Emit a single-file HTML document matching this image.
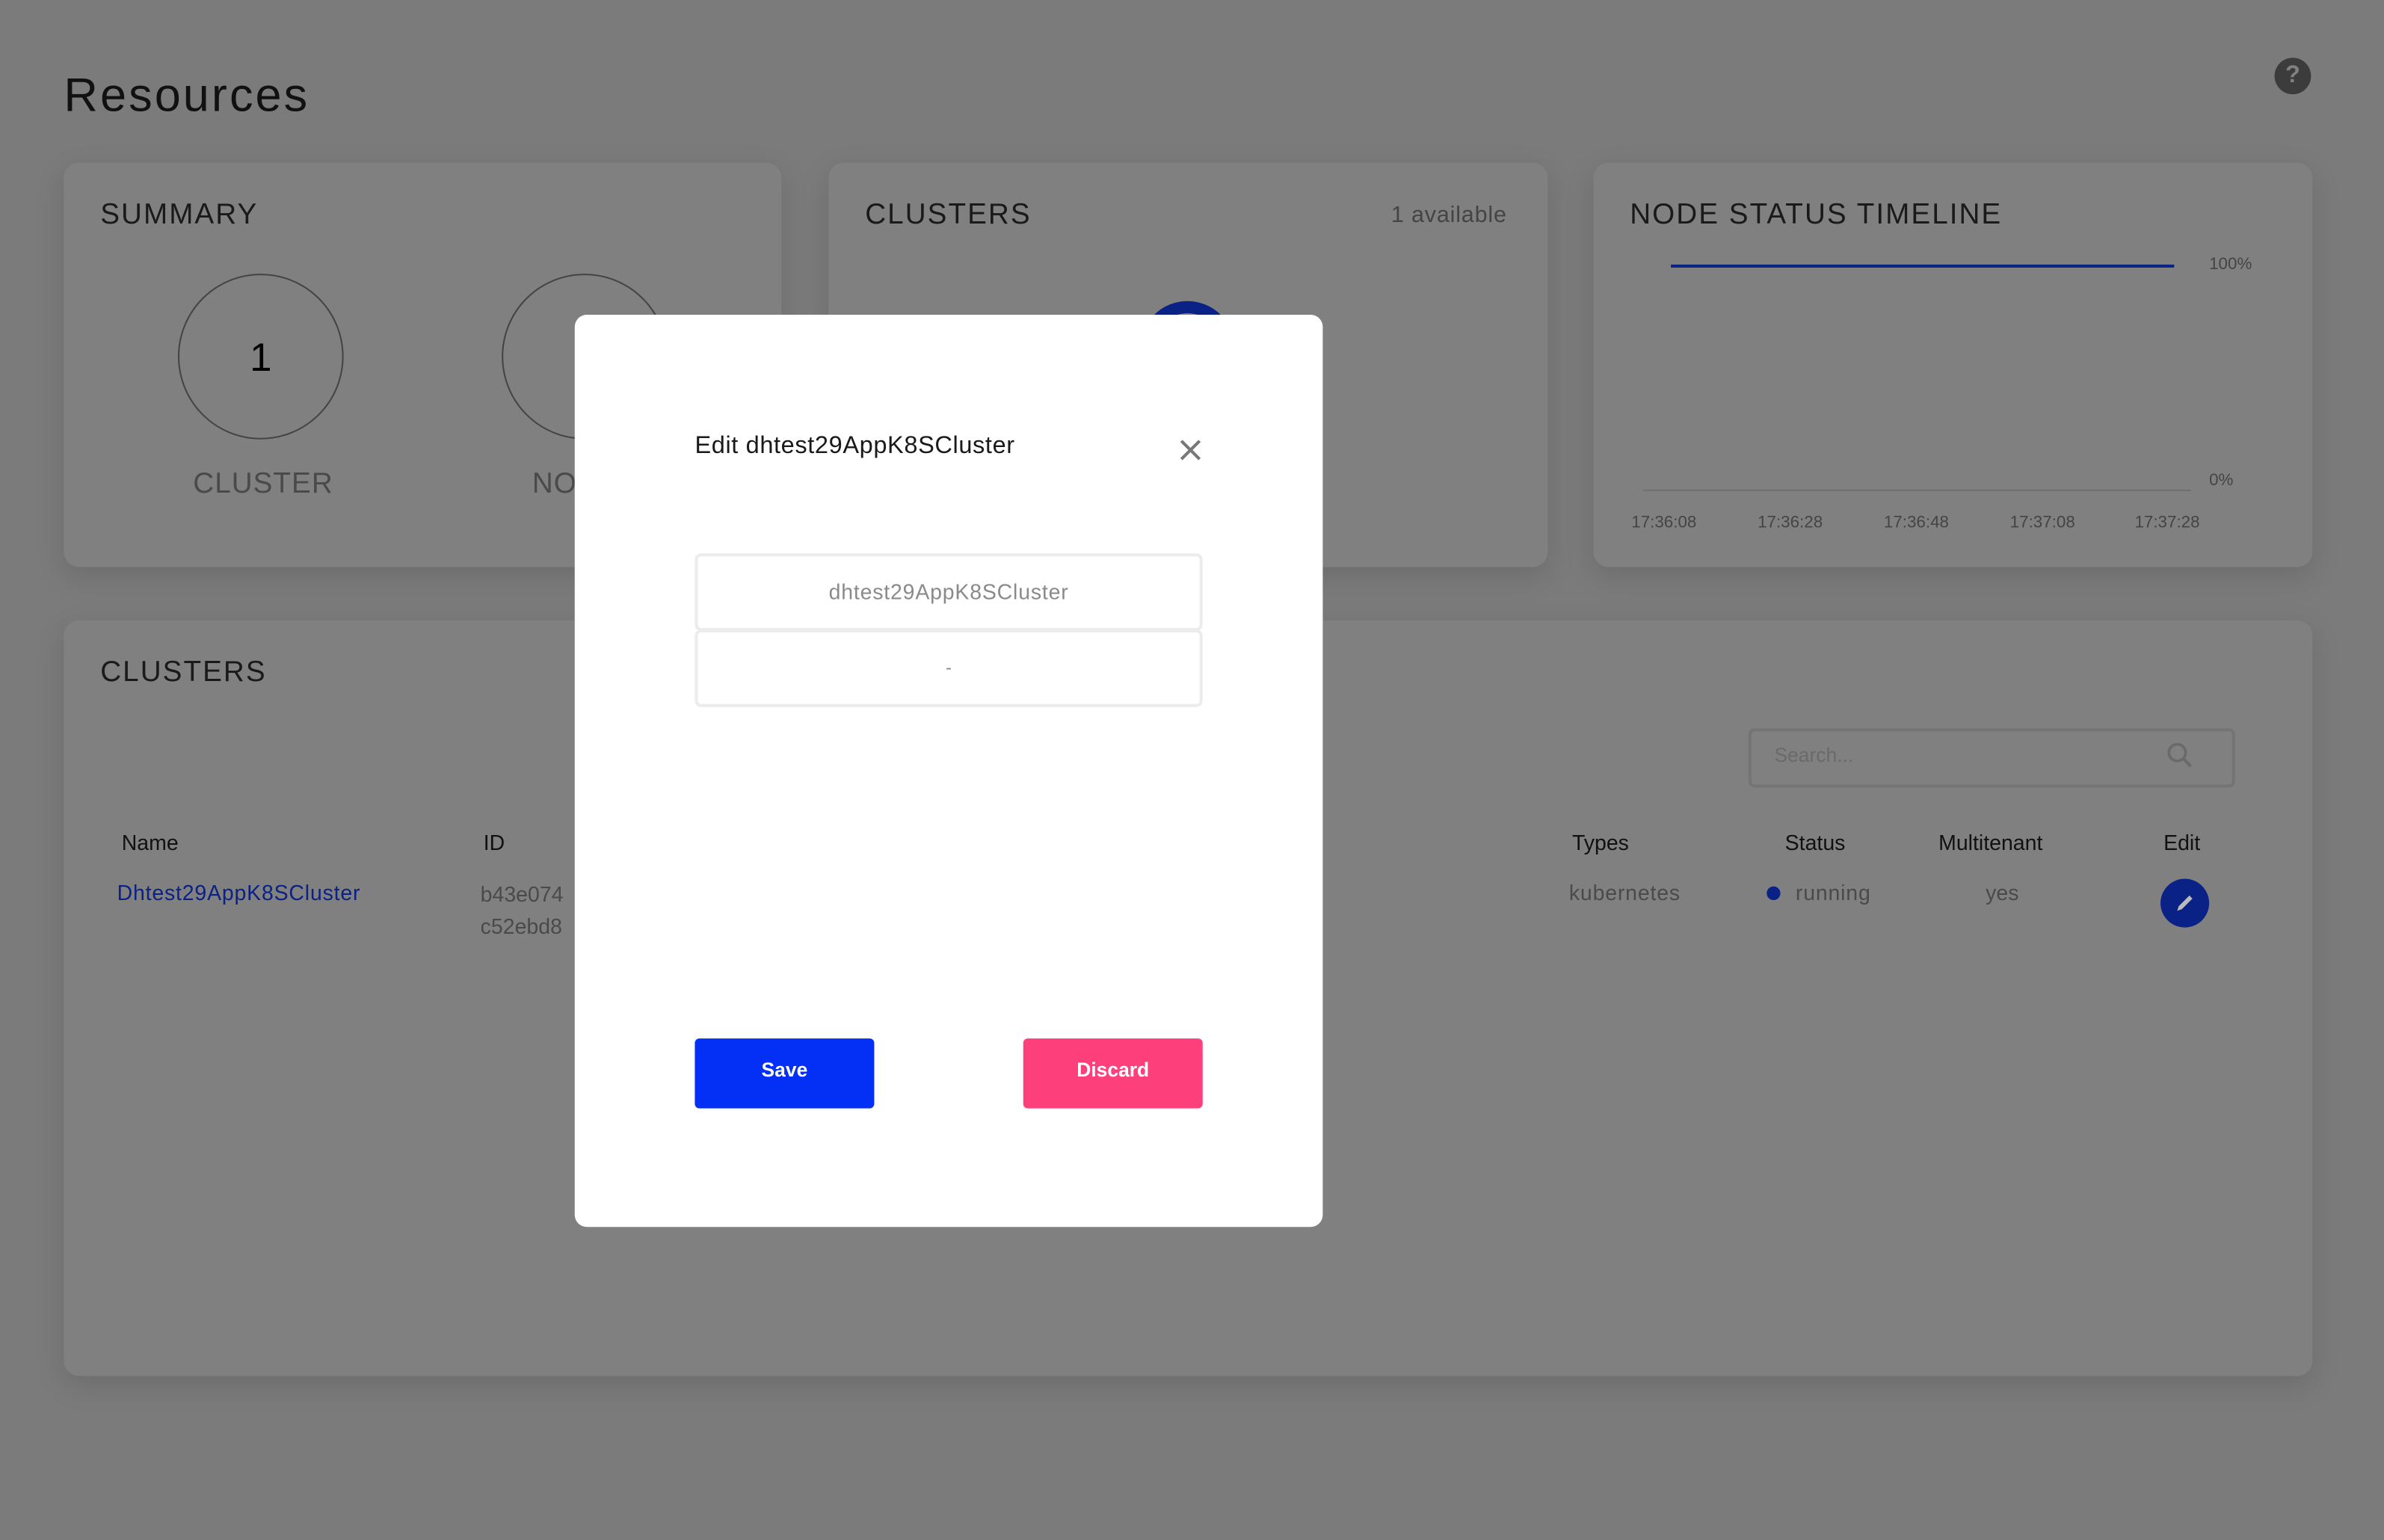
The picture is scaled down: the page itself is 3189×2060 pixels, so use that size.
<!DOCTYPE html>
<html><head><meta charset="utf-8"><style>
html,body{margin:0;padding:0;background:#7b7b7b;overflow:hidden}
#root{position:absolute;left:0;top:0;width:1568px;height:1013px;transform:scale(2.0338);transform-origin:0 0;font-family:"Liberation Sans",sans-serif;background:#7b7b7b}
.a{position:absolute;white-space:nowrap}
.card{position:absolute;background:#808080;border-radius:10px;box-shadow:0 6px 20px rgba(0,0,0,0.12)}
.h{font-size:19px;color:#1a1a1a;letter-spacing:1px}
.th{font-size:14px;color:#111}
.td{font-size:14px;color:#4a4a4a}
.ax{font-size:11px;color:#444}
</style></head><body><div id="root">
<div class="a" style="left:42px;top:45px;font-size:31px;color:#111;letter-spacing:1.5px">Resources</div>
<div class="a" style="left:1496px;top:38px;width:24px;height:24px;border-radius:50%;background:#3c3c3c;color:#808080;font-weight:bold;font-size:16px;text-align:center;line-height:24px">?</div>

<div class="card" style="left:42px;top:107px;width:472px;height:266px"></div>
<div class="a h" style="left:66px;top:131px">SUMMARY</div>
<div class="a" style="left:117px;top:180px;width:107px;height:107px;border:1px solid #444;border-radius:50%"></div>
<div class="a" style="left:117px;top:220px;width:109px;text-align:center;font-size:26px;color:#000">1</div>
<div class="a" style="left:127px;top:308px;font-size:19px;color:#4a4a4a;letter-spacing:0.5px">CLUSTER</div>
<div class="a" style="left:330px;top:180px;width:107px;height:107px;border:1px solid #444;border-radius:50%"></div>
<div class="a" style="left:350px;top:308px;font-size:19px;color:#4a4a4a;letter-spacing:0.5px">NODES</div>

<div class="card" style="left:545px;top:107px;width:473px;height:266px"></div>
<div class="a h" style="left:569px;top:131px">CLUSTERS</div>
<div class="a" style="left:915px;top:133px;font-size:15px;color:#444;letter-spacing:0.4px">1 available</div>
<div class="a" style="left:750px;top:198px;width:62px;height:62px;border:8px solid #0a2185;border-radius:50%;box-sizing:border-box"></div>

<div class="card" style="left:1048px;top:107px;width:473px;height:266px"></div>
<div class="a h" style="left:1072px;top:131px">NODE STATUS TIMELINE</div>
<div class="a" style="left:1099px;top:174px;width:331px;height:2px;background:#0a2185"></div>
<div class="a ax" style="left:1453px;top:168px">100%</div>
<div class="a" style="left:1081px;top:322px;width:360px;height:1px;background:#6e6e6e"></div>
<div class="a ax" style="left:1453px;top:310px">0%</div>
<div class="a ax" style="left:1073px;top:338px">17:36:08</div>
<div class="a ax" style="left:1156px;top:338px">17:36:28</div>
<div class="a ax" style="left:1239px;top:338px">17:36:48</div>
<div class="a ax" style="left:1322px;top:338px">17:37:08</div>
<div class="a ax" style="left:1404px;top:338px">17:37:28</div>

<div class="card" style="left:42px;top:408px;width:1479px;height:497px"></div>
<div class="a h" style="left:66px;top:432px">CLUSTERS</div>
<div class="a" style="left:1150px;top:479px;width:316px;height:35px;border:2px solid #747474;border-radius:4px"></div>
<div class="a" style="left:1167px;top:489px;font-size:13px;color:#6a6a6a">Search...</div>
<svg class="a" style="left:1424px;top:487px" width="20" height="20" viewBox="0 0 20 20"><circle cx="8" cy="8" r="5.5" fill="none" stroke="#6a6a6a" stroke-width="1.8"/><path d="M12 12l5 5" stroke="#6a6a6a" stroke-width="2"/></svg>
<div class="a th" style="left:80px;top:546px">Name</div>
<div class="a th" style="left:318px;top:546px">ID</div>
<div class="a th" style="left:1034px;top:546px">Types</div>
<div class="a th" style="left:1174px;top:546px">Status</div>
<div class="a th" style="left:1275px;top:546px">Multitenant</div>
<div class="a th" style="left:1423px;top:546px">Edit</div>
<div class="a" style="left:77px;top:579px;font-size:14px;color:#0a2185;letter-spacing:0.4px">Dhtest29AppK8SCluster</div>
<div class="a td" style="left:316px;top:578px;line-height:21px">b43e074<br>c52ebd8</div>
<div class="a td" style="left:1032px;top:579px;letter-spacing:0.4px">kubernetes</div>
<div class="a" style="left:1162px;top:583px;width:9px;height:9px;border-radius:50%;background:#0a2185"></div>
<div class="a td" style="left:1181px;top:579px;letter-spacing:0.4px">running</div>
<div class="a td" style="left:1306px;top:579px">yes</div>
<div class="a" style="left:1421px;top:578px;width:32px;height:32px;border-radius:50%;background:#0a2185"></div>
<svg class="a" style="left:1429px;top:586px" width="16" height="16" viewBox="0 0 16 16"><path d="M3 13l1-3 7-7 2 2-7 7z" fill="#bbb"/></svg>

<div class="a" style="left:378px;top:207px;width:492px;height:600px;background:#fff;border-radius:8px"></div>
<div class="a" style="left:457px;top:285px;font-size:16px;color:#1a1a1a;letter-spacing:0.3px">Edit dhtest29AppK8SCluster</div>
<svg class="a" style="left:776px;top:289px" width="14" height="14" viewBox="0 0 14 14"><path d="M1 1l12 12M13 1L1 13" stroke="#777" stroke-width="2"/></svg>
<div class="a" style="left:457px;top:364px;width:330px;height:47px;border:2px solid #ececec;border-radius:4px;text-align:center;line-height:47px;font-size:14px;color:#8a8a8a;letter-spacing:0.4px">dhtest29AppK8SCluster</div>
<div class="a" style="left:457px;top:414px;width:330px;height:47px;border:2px solid #ececec;border-radius:4px;text-align:center;line-height:47px;font-size:12px;color:#8a8a8a">-</div>
<div class="a" style="left:457px;top:683px;width:118px;height:46px;background:#0430f5;border-radius:3px;color:#fff;font-weight:bold;font-size:13px;text-align:center;line-height:42px">Save</div>
<div class="a" style="left:673px;top:683px;width:118px;height:46px;background:#fd3f7c;border-radius:3px;color:#fff;font-weight:bold;font-size:13px;text-align:center;line-height:42px">Discard</div>
</div></body></html>
